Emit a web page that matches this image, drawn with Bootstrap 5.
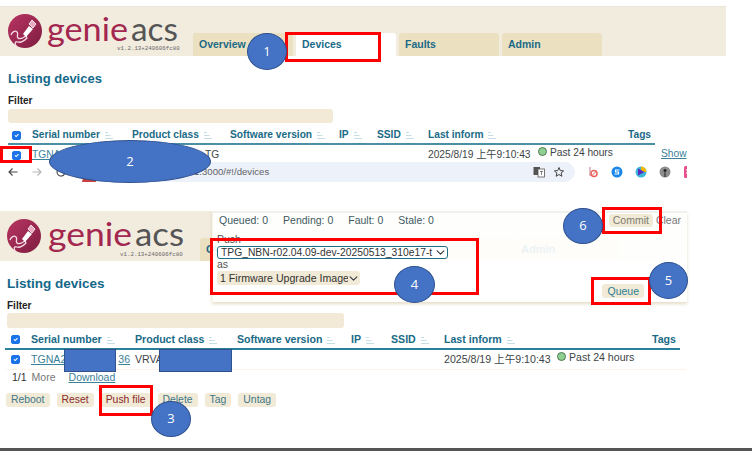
<!DOCTYPE html>
<html lang="en">
<head>
<meta charset="utf-8">
<title>GenieACS push file steps</title>
<link href="https://cdn.jsdelivr.net/npm/bootstrap@5.3.0/dist/css/bootstrap.min.css" rel="stylesheet">
<style>
html,body{margin:0;background:#fff;}
body{width:752px;height:451px;overflow:hidden;position:relative;font-family:"Liberation Sans","Noto Sans CJK TC",sans-serif;color:#3c4446;font-size:10.5px;line-height:1.2;}
.shot-a{height:211px;width:726px;padding-top:6px;}
.shot-b{height:237px;width:687px;position:relative;}
.app-head{height:50px;background:#f2ecdf;}
.shot-a .app-head{border-top:1px solid #e9e5da;}
.head-logo{flex:none;display:block;}
.shot-a .head-logo{width:193px;height:49px;}
.shot-b .head-logo{width:200px;height:49px;}
.logo-main{font-family:Lato,sans-serif;font-size:33px;font-weight:400;}
.logo-ver{font-family:"Liberation Mono",monospace;font-size:5.8px;fill:#666;}
.tab-cell{background:#ebe1c1;color:#1b6a87;font-weight:700;width:100px;height:23px;padding:5px 6px 0;border-radius:3px 3px 0 0;font-size:10.5px;}
.tab-cell.on{background:#fff;}
.tab-row{gap:3px;}
.shot-b .tab-cell{width:104px;font-size:11px;}
.shot-b .tab-row{gap:1px;}
.page-title{color:#14688a;font-weight:700;font-size:13px;margin:0;line-height:16px;}
.shot-a .page-title{padding:15px 0 0 8px;}
.shot-b .page-title{padding:15px 0 0 7px;font-size:13.5px;}
.filter-lab{color:#222;font-weight:700;font-size:10px;line-height:12px;}
.shot-a .filter-lab{padding:8px 0 0 8px;}
.shot-b .filter-lab{padding:8px 0 0 7px;}
.filter-box{background:#f2ead6;border-radius:3px;}
.shot-a .filter-box{margin:2px 0 0 8px;width:325px;height:14px;}
.shot-b .filter-box{margin:1px 0 0 7px;width:337px;height:15px;}
.dev-table{border-collapse:collapse;table-layout:fixed;margin:0;}
.dev-table th{color:#1a6a86;font-weight:700;padding:0;white-space:nowrap;vertical-align:middle;}
.dev-table td{padding:0;white-space:nowrap;vertical-align:middle;}
.shot-a .dev-table{margin:5px 0 0 8px;width:680px;font-size:10.2px;}
.shot-b .dev-table{margin:2px 0 0 5px;width:681px;font-size:10.6px;}
.shot-a th{height:16px;}
.shot-b th{height:19px;}
.dev-table thead th.rule{border-bottom:2px solid #4a8fa3;}
.shot-b thead th.rule{border-bottom-color:#2a7f9b;}
.shot-a .dev-table td{height:18px;padding-top:3px;}
.shot-b .dev-table td{height:20px;padding-top:1px;border-bottom:1px solid #fdf3e6;}
.c-cb-a{width:24px}.c-sn-a{width:100px}.c-pc-a{width:98px}.c-sw-a{width:109px}.c-ip-a{width:38px}.c-ss-a{width:51px}.c-li-a{width:110px}.c-st-a{width:90px}.c-tg-a{width:27px}.c-sh-a{width:33px}
.c-cb-b{width:26px}.c-sn-b{width:104px}.c-pc-b{width:102px}.c-sw-b{width:114px}.c-ip-b{width:40px}.c-ss-b{width:53px}.c-li-b{width:113px}.c-st-b{width:95px}.c-tg-b{width:28px}.c-sh-b{width:6px}
.dev-table .form-check-input{width:9px;height:9px;margin:0 0 0 4px;display:block;border-radius:2px;background-color:#1a73e8;border-color:#1a73e8;}
.shot-b .dev-table .form-check-input{margin-left:6px;}
.sort-mark{display:inline-block;vertical-align:-1px;margin-left:5px;}
.row-link{color:#3a8199;text-decoration:underline;}
.show-link{margin-left:6px;}
.gap-a{display:inline-block;width:73px;}
.gap-b{display:inline-block;width:52px;}
.dot-ok{display:inline-block;width:9px;height:9px;border-radius:50%;background:#8fcf8f;border:1px solid #4d7a55;vertical-align:0;margin-right:3px;}
.status-in{display:block;margin-top:-4px;}
.url-bar{height:20px;width:687px;overflow:hidden;color:#5f6368;padding-left:7px;}
.nav-ic{flex:none;width:12px;height:12px;margin-right:12px;display:block;}
.url-pill{flex:none;width:495px;height:20px;margin-left:1px;background:#edf1fa;border-radius:10px;padding-right:10px;position:relative;}
.site-chip{flex:none;width:14px;height:5px;background:#c9423f;border-radius:6px 6px 0 0;margin:15px 0 0 2px;}
.url-text{font-size:9.6px;color:#5f6368;margin-left:98px;}
.tool-ic{flex:none;width:12px;height:12px;display:block;}
.ext-row{flex:none;gap:12px;padding-left:12px;}
.foot-row{padding:1px 0 0 12px;font-size:10.5px;color:#333;height:16px;}
.foot-more{color:#777;margin:0 13px 0 5px;}
.act-row{gap:7px;padding:7px 0 0 6px;}
.gbtn{background:#f1ead6;border:0;border-radius:3px;font-size:10.4px;line-height:14px;padding:0 5px;height:14px;color:#3f7788;}
.gbtn.warn{color:#8a2a2a;}
.queue-pop{position:absolute;left:212px;top:0;width:475px;height:91px;background:rgba(255,255,255,.91);border-top:2px solid #f0f0ee;box-shadow:0 2px 3px rgba(200,180,130,.45);padding:1px 6px 0 4px;border-left:1px solid #f6f3ea;}
.pop-stats{color:#3f5a60;font-size:10.5px;gap:15px;padding-left:2px;line-height:12px;}
.pop-top{height:12px;}
.pop-right{gap:3px;}
.pop-clear{color:#777;font-size:10.5px;}
.pop-btn{background:#f1ead6;border-radius:3px;color:#7d7d73;font-size:10.5px;height:13px;line-height:13px;padding:0 4px;border:0;}
.pop-body{padding:8px 0 0 0;font-size:10.5px;color:#555;position:relative;}
.pop-body div{line-height:11px;}
.pop-body .form-select{display:block;padding:0 12px 0 3px;background-size:9px 9px;background-position:right 2px center;font-family:inherit;line-height:11px;min-height:0;color:#333;box-shadow:none;}
.pop-body .pick-file{width:231px;height:13px;font-size:10.3px;border:1.5px solid #1d6f86;border-radius:3px;background-color:#fff;margin-top:1px;}
.pop-body .pick-type{width:143px;height:14px;font-size:10.6px;border:0;border-radius:3px;background-color:#f1ead6;margin-top:1px;}
.pop-queue{position:absolute;right:43px;bottom:4px;color:#2d7d92;height:14px;line-height:14px;padding:0 5px;}
.end-bar{position:absolute;left:0;right:0;bottom:0;height:3px;background:#555;}
.anno-box{position:absolute;border:3px solid #f00;}
.b1{left:285px;top:32px;width:96px;height:30px;}
.b2{left:0;top:146px;width:32px;height:17px;}
.b3{left:99px;top:385px;width:54px;height:31px;}
.b4{left:210px;top:238px;width:269px;height:57px;}
.b5{left:591px;top:277px;width:60px;height:28px;}
.b6{left:602px;top:207px;width:60px;height:27px;}
.anno-dot{position:absolute;background:#4472c4;border:1px solid #2f528f;border-radius:50%;color:#fff;font-family:"Open Sans",sans-serif;font-size:13px;display:flex;align-items:center;justify-content:center;}
.d1{left:247px;top:33px;width:40px;height:37px;}
.d2{left:49px;top:140px;width:162px;height:43px;}
.d3{left:151px;top:401px;width:40px;height:36px;}
.d4{left:394px;top:266px;width:41px;height:37px;}
.d5{left:649px;top:262px;width:39px;height:37px;}
.d6{left:563px;top:208px;width:40px;height:36px;}
.mask{position:absolute;background:#4472c4;border:1px solid #2f528f;}
.m1{left:64px;top:349px;width:52px;height:23px;}
.m2{left:159px;top:349px;width:73px;height:23px;}
</style>
</head>
<body>
<svg width="0" height="0" class="position-absolute">
  <defs>
    <linearGradient id="lg" x1="0" y1="0" x2="1" y2="1"><stop offset="0" stop-color="#b83562"/><stop offset="1" stop-color="#7e1c40"/></linearGradient>
    <symbol id="badge" viewBox="0 0 34 34">
      <circle cx="17" cy="17" r="17" fill="url(#lg)"/>
      <path d="M3 21c1-3 4-5 6-3s-1 4 1 6 5 0 8-2l1 2c-3 3-6 5-9 4s-4 2-1 5" fill="none" stroke="#f7dbe4" stroke-width="1.300"/>
      <path d="M15 20l6-8 4 3-7 8z" fill="#fff"/>
      <path d="M21 10l3-4 4 4-3 4z" fill="#e9a9bf" stroke="#fff" stroke-width=".8"/>
    </symbol>
    <symbol id="sorter" viewBox="0 0 8 7">
      <path d="M0 .5h3M0 3.500h5.500M0 6.500h8" stroke="#c5dde4" stroke-width="1" fill="none"/>
    </symbol>
  </defs>
</svg>

<section class="shot-a">
  <header class="app-head d-flex align-items-end">
    <svg class="head-logo" viewBox="0 0 193 49">
      <use href="#badge" x="8" y="7" width="34" height="34"/>
      <text class="logo-main" x="47" y="34" fill="#a3274f" textLength="81" lengthAdjust="spacingAndGlyphs">genie</text>
      <text class="logo-main" x="131" y="34" fill="#555" textLength="47" lengthAdjust="spacingAndGlyphs">acs</text>
      <text class="logo-ver" x="117" y="43">v1.2.13+240606fc80</text>
    </svg>
    <nav class="tab-row d-flex">
      <div class="tab-cell">Overview</div>
      <div class="tab-cell on">Devices</div>
      <div class="tab-cell">Faults</div>
      <div class="tab-cell">Admin</div>
    </nav>
  </header>
  <h1 class="page-title">Listing devices</h1>
  <div class="filter-lab">Filter</div>
  <div class="filter-box"></div>
  <table class="dev-table">
    <colgroup><col class="c-cb-a"><col class="c-sn-a"><col class="c-pc-a"><col class="c-sw-a"><col class="c-ip-a"><col class="c-ss-a"><col class="c-li-a"><col class="c-st-a"><col class="c-tg-a"><col class="c-sh-a"></colgroup>
    <thead><tr>
      <th class="rule"><input class="form-check-input" type="checkbox" checked></th>
      <th class="rule">Serial number<svg class="sort-mark" width="8" height="7"><use href="#sorter"/></svg></th>
      <th class="rule">Product class<svg class="sort-mark" width="8" height="7"><use href="#sorter"/></svg></th>
      <th class="rule">Software version<svg class="sort-mark" width="8" height="7"><use href="#sorter"/></svg></th>
      <th class="rule">IP<svg class="sort-mark" width="8" height="7"><use href="#sorter"/></svg></th>
      <th class="rule">SSID<svg class="sort-mark" width="8" height="7"><use href="#sorter"/></svg></th>
      <th class="rule" colspan="2">Last inform<svg class="sort-mark" width="8" height="7"><use href="#sorter"/></svg></th>
      <th class="rule">Tags</th>
      <th></th>
    </tr></thead>
    <tbody><tr>
      <td><input class="form-check-input" type="checkbox" checked></td>
      <td><a class="row-link" href="#">TGNA</a></td>
      <td><span class="gap-a"></span>TG</td>
      <td></td><td></td><td></td>
      <td>2025/8/19 上午9:10:43</td>
      <td><span class="status-in"><span class="dot-ok"></span>Past 24 hours</span></td>
      <td></td>
      <td><a class="row-link show-link" href="#">Show</a></td>
    </tr></tbody>
  </table>
  <div class="url-bar d-flex align-items-center">
    <svg class="nav-ic" viewBox="0 0 12 12"><path d="M10.500 6H2M5.500 2.500 2 6l3.500 3.500" fill="none" stroke="#444" stroke-width="1.100"/></svg>
    <svg class="nav-ic" viewBox="0 0 12 12"><path d="M1.500 6H10M6.500 2.500 10 6 6.500 9.500" fill="none" stroke="#b5b5b5" stroke-width="1.100"/></svg>
    <svg class="nav-ic" viewBox="0 0 12 12"><path d="M10 6a4 4 0 1 1-1.200-2.800" fill="none" stroke="#444" stroke-width="1.100"/></svg>
    <div class="url-pill d-flex align-items-center">
      <span class="site-chip"></span>
      <span class="url-text flex-grow-1">1:3000/#!/devices</span>
      <svg class="tool-ic me-2" viewBox="0 0 12 12"><rect x=".5" y="1" width="6.500" height="8" fill="#555"/><rect x="5" y="3" width="6.500" height="8" fill="#fff" stroke="#555" stroke-width=".8"/><path d="M7 5.500h3M8.500 5v4" stroke="#555" stroke-width=".7"/></svg>
      <svg class="tool-ic" viewBox="0 0 12 12"><path d="M6 1.500 7.300 4.600l3.300.3-2.500 2.100.8 3.300L6 8.500l-2.900 1.800.8-3.300L1.400 4.900l3.300-.3z" fill="none" stroke="#444" stroke-width="1"/></svg>
    </div>
    <div class="ext-row d-flex align-items-center">
      <svg class="tool-ic" viewBox="0 0 12 12"><path d="M3 1v9" stroke="#d8a7b5" stroke-width="1.500"/><circle cx="7" cy="7.500" r="3" fill="none" stroke="#e8605a" stroke-width="1.500"/><path d="M5 9.500l4-4" stroke="#e8605a"/></svg>
      <svg class="tool-ic" viewBox="0 0 12 12"><circle cx="6" cy="6" r="5.500" fill="#1a87e8"/><path d="M8.500 4H4.500v2h3v2h-4" fill="none" stroke="#fff" stroke-width="1.200"/></svg>
      <svg class="tool-ic" viewBox="0 0 12 12"><circle cx="6" cy="6" r="5.500" fill="#3ab6d8"/><path d="M6 .5A5.500 5.500 0 0 1 11.500 6H6z" fill="#f7b500"/><path d="M3 2.500 9.500 6 3 9.500z" fill="#5a2bc4"/></svg>
      <svg class="tool-ic" viewBox="0 0 12 12"><circle cx="6" cy="6" r="5.500" fill="#8d8d8d"/><circle cx="6" cy="4.500" r="1.500" fill="#222"/><path d="M5.500 6.500h1V11h-1z" fill="#222"/></svg>
      <svg class="tool-ic" viewBox="0 0 12 12"><rect x="1" y="0" width="11" height="12" rx="1.500" fill="#ea4f8f"/><path d="M3 4h6M3 7h6" stroke="#fff"/></svg>
    </div>
  </div>
</section>

<section class="shot-b">
  <header class="app-head d-flex align-items-end">
    <svg class="head-logo" viewBox="0 0 200 49">
      <use href="#badge" x="7" y="7" width="34" height="34"/>
      <text class="logo-main" x="48" y="34" fill="#a3274f" textLength="84" lengthAdjust="spacingAndGlyphs">genie</text>
      <text class="logo-main" x="135" y="34" fill="#555" textLength="49" lengthAdjust="spacingAndGlyphs">acs</text>
      <text class="logo-ver" x="120" y="44">v1.2.13+240606fc80</text>
    </svg>
    <nav class="tab-row d-flex">
      <div class="tab-cell">Overview</div>
      <div class="tab-cell on">Devices</div>
      <div class="tab-cell">Faults</div>
      <div class="tab-cell">Admin</div>
    </nav>
  </header>
  <h1 class="page-title">Listing devices</h1>
  <div class="filter-lab">Filter</div>
  <div class="filter-box"></div>
  <table class="dev-table">
    <colgroup><col class="c-cb-b"><col class="c-sn-b"><col class="c-pc-b"><col class="c-sw-b"><col class="c-ip-b"><col class="c-ss-b"><col class="c-li-b"><col class="c-st-b"><col class="c-tg-b"><col class="c-sh-b"></colgroup>
    <thead><tr>
      <th class="rule"><input class="form-check-input" type="checkbox" checked></th>
      <th class="rule">Serial number<svg class="sort-mark" width="8" height="7"><use href="#sorter"/></svg></th>
      <th class="rule">Product class<svg class="sort-mark" width="8" height="7"><use href="#sorter"/></svg></th>
      <th class="rule">Software version<svg class="sort-mark" width="8" height="7"><use href="#sorter"/></svg></th>
      <th class="rule">IP<svg class="sort-mark" width="8" height="7"><use href="#sorter"/></svg></th>
      <th class="rule">SSID<svg class="sort-mark" width="8" height="7"><use href="#sorter"/></svg></th>
      <th class="rule" colspan="2">Last inform<svg class="sort-mark" width="8" height="7"><use href="#sorter"/></svg></th>
      <th class="rule">Tags</th>
      <th></th>
    </tr></thead>
    <tbody><tr>
      <td><input class="form-check-input" type="checkbox" checked></td>
      <td><a class="row-link" href="#">TGNA2<span class="gap-b"></span>36</a></td>
      <td>VRVA</td>
      <td></td><td></td><td></td>
      <td>2025/8/19 上午9:10:43</td>
      <td><span class="status-in"><span class="dot-ok"></span>Past 24 hours</span></td>
      <td></td><td></td>
    </tr></tbody>
  </table>
  <div class="foot-row"><b class="fw-normal">1/1</b><span class="foot-more">More</span><a class="row-link" href="#">Download</a></div>
  <div class="act-row d-flex">
    <button class="gbtn" type="button">Reboot</button>
    <button class="gbtn warn" type="button">Reset</button>
    <button class="gbtn warn" type="button">Push file</button>
    <button class="gbtn" type="button">Delete</button>
    <button class="gbtn" type="button">Tag</button>
    <button class="gbtn" type="button">Untag</button>
  </div>

  <aside class="queue-pop">
    <div class="pop-top d-flex justify-content-between">
      <div class="pop-stats d-flex">
        <span>Queued: 0</span><span>Pending: 0</span><span>Fault: 0</span><span>Stale: 0</span>
      </div>
      <div class="pop-right d-flex align-items-center">
        <button class="pop-btn" type="button">Commit</button>
        <span class="pop-clear">Clear</span>
      </div>
    </div>
    <div class="pop-body">
      <div>Push</div>
      <select class="form-select pick-file"><option>TPG_NBN-r02.04.09-dev-20250513_310e17-t</option></select>
      <div>as</div>
      <select class="form-select pick-type"><option>1 Firmware Upgrade Image</option></select>
    </div>
    <button class="pop-btn pop-queue" type="button">Queue</button>
  </aside>
</section>

<div class="end-bar"></div>

<div class="mask m1"></div>
<div class="mask m2"></div>
<div class="anno-box b1"></div>
<div class="anno-box b2"></div>
<div class="anno-box b3"></div>
<div class="anno-box b4"></div>
<div class="anno-box b5"></div>
<div class="anno-box b6"></div>
<div class="anno-dot d1">1</div>
<div class="anno-dot d2">2</div>
<div class="anno-dot d3">3</div>
<div class="anno-dot d4">4</div>
<div class="anno-dot d5">5</div>
<div class="anno-dot d6">6</div>

<script src="https://cdn.jsdelivr.net/npm/bootstrap@5.3.0/dist/js/bootstrap.bundle.min.js"></script>
</body>
</html>
